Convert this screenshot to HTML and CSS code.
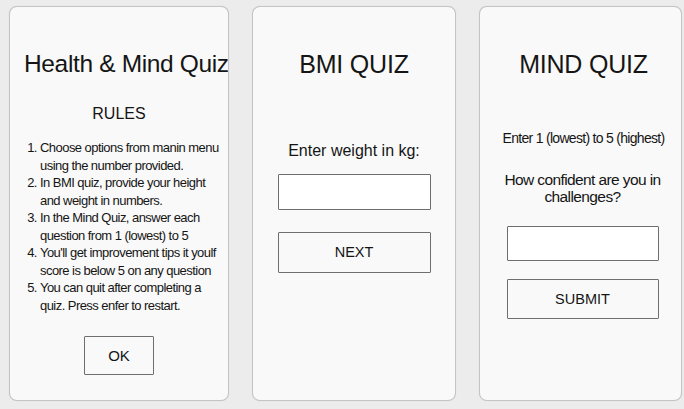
FILE: index.html
```html
<!DOCTYPE html>
<html>
<head>
<meta charset="utf-8">
<link rel="stylesheet" href="styles.css">
</head>
<body>
<main class="screens">
  <section class="card card-home">
    <h1 class="title title-home">Health &amp; Mind Quiz</h1>
    <h2 class="rules-heading">RULES</h2>
    <ol class="rules">
      <li>Choose options from manin menu using the number provided.</li>
      <li>In BMI quiz, provide your height and weight in numbers.</li>
      <li>In the Mind Quiz, answer each question from 1 (lowest) to 5</li>
      <li>You'll get improvement tips it youlf score is below 5 on any question</li>
      <li>You can quit after completing a quiz. Press enfer to restart.</li>
    </ol>
    <button class="btn btn-ok">OK</button>
  </section>
  <section class="card card-bmi">
    <h1 class="title">BMI QUIZ</h1>
    <p class="label label-bmi">Enter weight in kg:</p>
    <div class="field field-bmi"></div>
    <button class="btn btn-wide btn-next">NEXT</button>
  </section>
  <section class="card card-mind">
    <h1 class="title title-mind">MIND QUIZ</h1>
    <p class="hint">Enter 1 (lowest) to 5 (highest)</p>
    <p class="question">How confident are you in challenges?</p>
    <div class="field field-mind"></div>
    <button class="btn btn-wide btn-submit">SUBMIT</button>
  </section>
</main>
</body>
</html>
```
FILE: styles.css
```css
* { box-sizing: border-box; }
html, body { margin: 0; padding: 0; }
body {
  background: #ececec;
  font-family: "Liberation Sans", Arial, sans-serif;
  color: #151515;
  width: 684px;
  height: 409px;
  overflow: hidden;
}
.screens {
  display: grid;
  grid-template-columns: 220px 204px 203px;
  column-gap: 23px;
  padding: 6px 0 0 9px;
}
.card {
  height: 395px;
  background: #f9f9f9;
  border: 1px solid #c4c4c4;
  border-radius: 8px;
  box-shadow: 0 0 1px rgba(0,0,0,0.15);
  display: flex;
  flex-direction: column;
  align-items: center;
  overflow: hidden;
}
.title {
  margin: 42px 0 0;
  font-size: 25px;
  line-height: 30px;
  font-weight: normal;
  white-space: nowrap;
  letter-spacing: -0.2px;
}
.title-home {
  align-self: flex-start;
  margin-left: 14px;
  font-size: 24.5px;
  letter-spacing: -0.35px;
}
.title-mind {
  margin-left: 6px;
}
.rules-heading {
  margin: 25px 0 0;
  font-size: 16px;
  line-height: 20px;
  font-weight: normal;
}
.rules {
  margin: 15px 0 0;
  padding: 0 0 0 30px;
  align-self: stretch;
  font-size: 13px;
  line-height: 17.5px;
  letter-spacing: -0.55px;
}
.btn {
  font-family: inherit;
  color: #151515;
  background: transparent;
  border: 1.5px solid #6e6e6e;
  border-radius: 1px;
  padding: 0;
}
.btn-ok {
  margin-top: 22px;
  width: 70px;
  height: 39px;
  font-size: 15px;
}
.label {
  margin: 62px 0 0;
  font-size: 16px;
  line-height: 20px;
}
.field {
  background: #fff;
  border: 1.5px solid #6e6e6e;
  border-radius: 1px;
}
.field-bmi {
  margin-top: 12.5px;
  width: 153px;
  height: 36px;
}
.btn-wide {
  font-size: 14.5px;
}
.btn-next {
  margin-top: 22px;
  width: 153px;
  height: 41px;
}
.hint {
  margin: 50px 0 0 6px;
  font-size: 14px;
  line-height: 18px;
  letter-spacing: -0.7px;
  white-space: nowrap;
}
.question {
  margin: 23.5px 0 0 4px;
  width: 190px;
  text-align: center;
  font-size: 15.5px;
  line-height: 17.5px;
  letter-spacing: -0.6px;
}
.field-mind {
  margin: 20.5px 0 0 4px;
  width: 152px;
  height: 35px;
}
.btn-submit {
  margin: 18px 0 0 4px;
  width: 152px;
  height: 40px;
}
```
